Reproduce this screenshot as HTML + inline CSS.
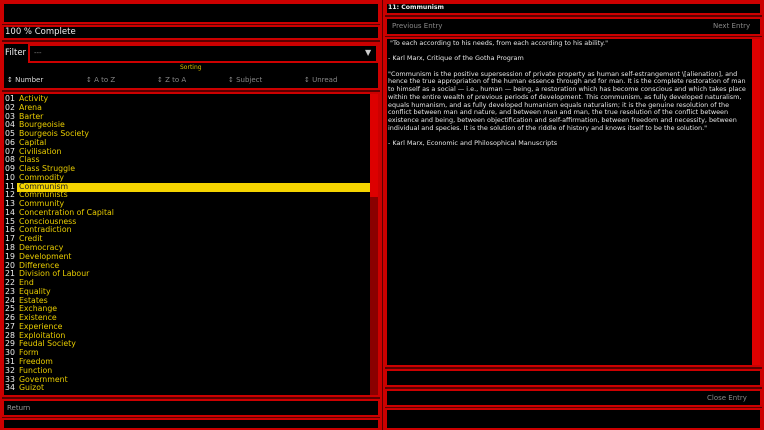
<!DOCTYPE html>
<html><head><style>
*{margin:0;padding:0;box-sizing:border-box}
body{width:764px;height:430px;background:#5a0000;position:relative;overflow:hidden;font-family:"DejaVu Sans","Liberation Sans",sans-serif;color:#ddd}
.b{position:absolute;background:#000;border:2px solid #cc0000}
.t{position:absolute;white-space:nowrap}
.list{position:absolute;left:5px;top:95px;font-size:7.8px;line-height:8.77px;white-space:nowrap}
.list div{height:8.77px}
.list .n{display:inline-block;width:14px;color:#eee}
.list .w{color:#e8cc00}
.c{font-size:6.45px;line-height:7.7px;color:#e6e6e6}
</style></head><body>
<div class="b" style="left:0;top:0;width:382px;height:430px;background:#5a0000"></div>
<div class="b" style="left:2px;top:2px;width:378px;height:22px"></div>
<div class="b" style="left:2px;top:25px;width:378px;height:15px"></div>
<div class="t" style="left:5px;top:27px;font-size:8.5px;color:#eee">100 % Complete</div>
<div class="b" style="left:2px;top:42px;width:378px;height:48px"></div>
<div class="t" style="left:5px;top:48px;font-size:8.5px;color:#eee">Filter</div>
<div class="b" style="left:28px;top:44px;width:350px;height:19px"></div>
<div class="t" style="left:34px;top:49px;font-size:7px;color:#888">---</div>
<div class="t" style="left:365px;top:48px;font-size:8px;color:#ccc">▼</div>
<div class="t" style="left:180px;top:64px;font-size:6px;color:#d8c000">Sorting</div>
<div class="t" style="left:7px;top:76px;font-size:7px;color:#ddd">↕ Number</div>
<div class="t" style="left:86px;top:76px;font-size:7px;color:#888">↕ A to Z</div>
<div class="t" style="left:157px;top:76px;font-size:7px;color:#888">↕ Z to A</div>
<div class="t" style="left:228px;top:76px;font-size:7px;color:#888">↕ Subject</div>
<div class="t" style="left:304px;top:76px;font-size:7px;color:#888">↕ Unread</div>
<div class="b" style="left:2px;top:92px;width:378px;height:305px"></div>
<div style="position:absolute;left:370px;top:94px;width:8px;height:301px;background:#8a0000"></div>
<div style="position:absolute;left:370px;top:94px;width:8px;height:103px;background:#dd0000"></div>
<div style="position:absolute;left:17px;top:183px;width:353px;height:9px;background:#f5d400"></div>
<div class="list">
<div><span class="n">01</span><span class="w">Activity</span></div>
<div><span class="n">02</span><span class="w">Arena</span></div>
<div><span class="n">03</span><span class="w">Barter</span></div>
<div><span class="n">04</span><span class="w">Bourgeoisie</span></div>
<div><span class="n">05</span><span class="w">Bourgeois Society</span></div>
<div><span class="n">06</span><span class="w">Capital</span></div>
<div><span class="n">07</span><span class="w">Civilisation</span></div>
<div><span class="n">08</span><span class="w">Class</span></div>
<div><span class="n">09</span><span class="w">Class Struggle</span></div>
<div><span class="n">10</span><span class="w">Commodity</span></div>
<div><span class="n">11</span><span class="w" style="color:#222">Communism</span></div>
<div><span class="n">12</span><span class="w">Communists</span></div>
<div><span class="n">13</span><span class="w">Community</span></div>
<div><span class="n">14</span><span class="w">Concentration of Capital</span></div>
<div><span class="n">15</span><span class="w">Consciousness</span></div>
<div><span class="n">16</span><span class="w">Contradiction</span></div>
<div><span class="n">17</span><span class="w">Credit</span></div>
<div><span class="n">18</span><span class="w">Democracy</span></div>
<div><span class="n">19</span><span class="w">Development</span></div>
<div><span class="n">20</span><span class="w">Difference</span></div>
<div><span class="n">21</span><span class="w">Division of Labour</span></div>
<div><span class="n">22</span><span class="w">End</span></div>
<div><span class="n">23</span><span class="w">Equality</span></div>
<div><span class="n">24</span><span class="w">Estates</span></div>
<div><span class="n">25</span><span class="w">Exchange</span></div>
<div><span class="n">26</span><span class="w">Existence</span></div>
<div><span class="n">27</span><span class="w">Experience</span></div>
<div><span class="n">28</span><span class="w">Exploitation</span></div>
<div><span class="n">29</span><span class="w">Feudal Society</span></div>
<div><span class="n">30</span><span class="w">Form</span></div>
<div><span class="n">31</span><span class="w">Freedom</span></div>
<div><span class="n">32</span><span class="w">Function</span></div>
<div><span class="n">33</span><span class="w">Government</span></div>
<div><span class="n">34</span><span class="w">Guizot</span></div>
</div>
<div class="b" style="left:2px;top:399px;width:378px;height:18px"></div>
<div class="t" style="left:7px;top:404px;font-size:7px;color:#999">Return</div>
<div class="b" style="left:2px;top:418px;width:378px;height:12px"></div>

<div class="b" style="left:383px;top:0;width:381px;height:430px;background:#5a0000"></div>
<div class="b" style="left:385px;top:2px;width:377px;height:13px"></div>
<div class="t" style="left:388px;top:4px;font-size:6.2px;color:#eee;font-weight:bold">11: Communism</div>
<div class="b" style="left:385px;top:17px;width:377px;height:19px"></div>
<div class="t" style="left:392px;top:22px;font-size:7px;color:#888">Previous Entry</div>
<div class="t" style="left:713px;top:22px;font-size:7px;color:#888">Next Entry</div>
<div class="b" style="left:385px;top:37px;width:377px;height:330px"></div>
<div style="position:absolute;left:752px;top:39px;width:8px;height:326px;background:#dd0000"></div>
<div class="t c" style="left:388px;top:40px;width:362px;white-space:normal">
<div>&nbsp;"To each according to his needs, from each according to his ability."</div>
<div style="height:7.7px"></div>
<div>- Karl Marx, Critique of the Gotha Program</div>
<div style="height:7.7px"></div>
<div>"Communism is the positive supersession of private property as human self-estrangement \[alienation], and hence the true appropriation of the human essence through and for man. It is the complete restoration of man<br>to himself as a social — i.e., human — being, a restoration which has become conscious and which takes place within the entire wealth of previous periods of development. This communism, as fully developed naturalism, equals humanism, and as fully developed humanism equals naturalism; it is the genuine resolution of the conflict between man and nature, and between man and man, the true resolution of the conflict between existence and being, between objectification and self-affirmation, between freedom and necessity, between individual and species. It is the solution of the riddle of history and knows itself to be the solution."</div>
<div style="height:7.7px"></div>
<div>- Karl Marx, Economic and Philosophical Manuscripts</div>
</div>
<div class="b" style="left:385px;top:369px;width:377px;height:18px"></div>
<div class="b" style="left:385px;top:389px;width:377px;height:18px"></div>
<div class="t" style="left:707px;top:394px;font-size:7px;color:#888">Close Entry</div>
<div class="b" style="left:385px;top:408px;width:377px;height:22px"></div>
</body></html>
